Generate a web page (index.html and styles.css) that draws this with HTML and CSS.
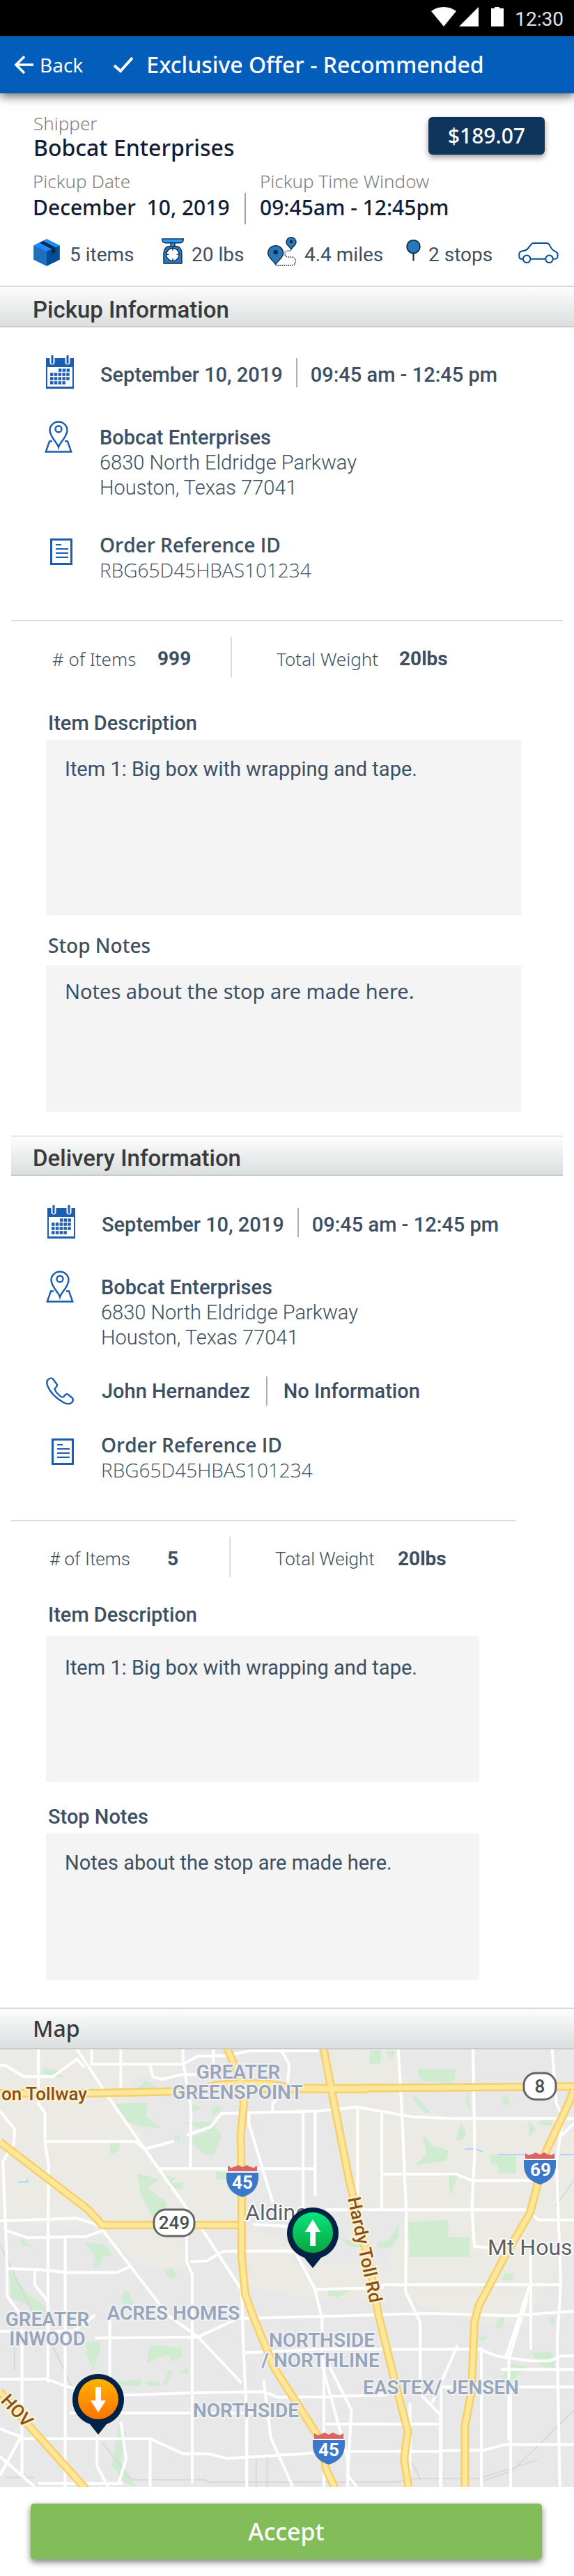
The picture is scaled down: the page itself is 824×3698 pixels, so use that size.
FILE: index.html
```html
<!DOCTYPE html>
<html lang="en">
<head>
<meta charset="utf-8">
<meta name="viewport" content="width=device-width, initial-scale=1">
<title>Exclusive Offer - Recommended</title>
<link rel="stylesheet" href="styles.css">
</head>
<body>
<svg class="sprite" aria-hidden="true">
  <symbol id="calendar" viewBox="0 0 40 48">
    <path d="M0 4h40v44H0z" fill="#1b5db3"/>
    <path d="M2 17h36v28H2z" fill="#fff"/>
    <path d="M9 2v8M31 2v8" stroke="#fff" stroke-width="7" stroke-linecap="round"/>
    <path d="M9 1v10M31 1v10" stroke="#1b5db3" stroke-width="3" stroke-linecap="round"/>
    <path d="M18 21.500h16M6 27.500h28M6 33.500h28M6 39.500h22" stroke="#1b5db3" stroke-width="4.500" stroke-dasharray="4.500 1.300"/>
  </symbol>
  <symbol id="place" viewBox="0 0 40 46">
    <g fill="none" stroke="#1b5db3" stroke-width="2.400">
      <path d="M20 38C18 31 7.500 23 7.500 13.500a12.500 12 0 0 1 25 0C32.500 23 22 31 20 38z"/>
      <circle cx="20" cy="12" r="4.500"/>
      <path d="M11 29.500H7L1.800 44.500h36.400L33 29.500h-4"/>
    </g>
  </symbol>
  <symbol id="order" viewBox="0 0 32 38">
    <path d="M1.500 1.500h29v35h-29z" fill="none" stroke="#1b5db3" stroke-width="3"/>
    <path d="M8 9h8M8 15h18M8 21h18M8 27h18" stroke="#1b5db3" stroke-width="2"/>
  </symbol>
  <symbol id="phone" viewBox="0 0 40 40">
    <path d="M3.500 3C7 .5 9 1 11 4l4.500 6c1.500 3-.5 4.500-2.500 6-1.500 2 2 6 5 9s6 4.500 7.500 3l2-2.500c1.500-1.800 3.500-1.500 5 0l5 4c2 2 1.700 4 0 6.500-2.500 3-6.500 3-12 .5C15.500 31 6 22 2 12 .8 8 1 5 3.500 3z" fill="none" stroke="#1b5db3" stroke-width="2.400" stroke-linejoin="round"/>
  </symbol>
  <symbol id="interstate" viewBox="0 0 46 46">
    <path d="M2 1l5 3 6-2 4-2 6 3 6-3 4 2 6 2 5-3v8H2z" fill="#da6462"/>
    <path d="M0 11h46c1 16-3 29-23 35C3 40-1 27 0 11z" fill="#3b78c9"/>
    <path d="M0 10h46" stroke="#fff" stroke-width="2"/>
  </symbol>
</svg>

<div class="status">
  <svg class="status-icons" viewBox="0 0 104 28" aria-hidden="true">
    <path d="M0 6C10-2 26-2 36 6L18 28z M68 0v28H40z M86 2h5V0h7v2h6v26H86z" fill="#fff"/>
  </svg>
  <time>12:30</time>
</div>

<header class="topbar">
  <button class="back" type="button">
    <svg class="back-icon" viewBox="0 0 28 26" aria-hidden="true"><path d="M15 1L3 13l12 12M3 13h25" fill="none" stroke="#fff" stroke-width="3.500"/></svg>
    Back
  </button>
  <h1 class="title">
    <svg class="check-icon" viewBox="0 0 30 24" aria-hidden="true"><path d="M2 13l9 8L28 2" fill="none" stroke="#fff" stroke-width="4"/></svg>
    Exclusive Offer - Recommended
  </h1>
</header>

<main>
  <section class="summary">
    <div class="shipper">
      <div>
        <p class="caption">Shipper</p>
        <p class="name">Bobcat Enterprises</p>
      </div>
      <span class="price">$189.07</span>
    </div>
    <div class="window">
      <div class="window-date">
        <p class="caption">Pickup Date</p>
        <p class="value">December&nbsp; 10, 2019</p>
      </div>
      <div class="window-time">
        <p class="caption">Pickup Time Window</p>
        <p class="value">09:45am - 12:45pm</p>
      </div>
    </div>
    <ul class="stats">
      <li class="stat stat-items">
        <svg width="38" height="39" viewBox="0 0 114 118" aria-hidden="true">
          <path d="M57 0l57 28-57 28L0 28z" fill="#1a8cff"/><path d="M0 28l57 26v64L0 90z" fill="#1f6fbd"/><path d="M114 28L57 54v64l57-28z" fill="#004e98"/>
          <path d="M26 17l16-8 52 27v22l-15 8V44z" fill="#0c2947"/>
        </svg>
        5 items
      </li>
      <li class="stat stat-weight">
        <svg width="32" height="37" viewBox="0 0 98 112" aria-hidden="true">
          <g stroke="#0c2947" stroke-width="4">
            <path d="M40 18h18v18H40z" fill="#2f97f7"/>
            <path d="M2 2h94c0 13-5 18-14 18H16C7 20 2 15 2 2z" fill="#2f97f7"/>
            <path d="M9 110V66c0-20 12-32 26-32h28c14 0 26 12 26 32v44z" fill="#2879b9"/>
            <circle cx="49" cy="71" r="28" fill="#fff"/>
            <path d="M49 45v9M49 88v9M23 71h9M66 71h9"/>
          </g>
        </svg>
        20 lbs
      </li>
      <li class="stat stat-miles">
        <svg width="42" height="42" viewBox="0 0 126 126" aria-hidden="true">
          <g fill="#2879b9" stroke="#0c2947" stroke-width="4">
            <path d="M35 119C24 99 2 92 2 70a33 32 0 0 1 66 0c0 22-22 29-33 49z"/>
            <path d="M102 54C96 42 81 36 81 23a21 21 0 0 1 42 0c0 13-15 19-21 31z"/>
          </g>
          <circle cx="35" cy="66" r="10" fill="#0c2947"/><circle cx="102" cy="21" r="7" fill="#0c2947"/>
          <path d="M100 60H84c-14 6-12 26 4 27h18c20 2 20 32 0 36H36" fill="none" stroke="#0c2947" stroke-width="4" stroke-dasharray="5 4"/>
        </svg>
        4.4 miles
      </li>
      <li class="stat stat-stops">
        <svg width="21" height="31" viewBox="0 0 62 92" aria-hidden="true"><path d="M31 56v35" stroke="#0c2947" stroke-width="6"/><circle cx="31" cy="30" r="28" fill="#2879b9" stroke="#0c2947" stroke-width="5"/></svg>
        2 stops
      </li>
      <li class="stat stat-vehicle">
        <svg width="58" height="30" viewBox="0 0 174 91" role="img" aria-label="Car">
          <g fill="none" stroke="#004e98" stroke-width="6">
            <path d="M19 72h-6C5 72 3 67 3 60V50c0-9 7-11 25-15 9-2 12-6 18-15C55 7 58 3 68 3h54c10 0 12 6 18 18 5 10 9 13 18 17 10 4 13 8 13 18 0 12-3 16-13 16h-7M54 72h62"/>
            <circle cx="36" cy="72" r="16"/><circle cx="134" cy="72" r="16"/>
          </g>
        </svg>
      </li>
    </ul>
  </section>

  <section>
    <h2 class="section-head">Pickup Information</h2>
    <div class="details">
      <div class="detail detail-date">
        <svg class="icon" width="40" height="48" aria-hidden="true"><use href="#calendar"/></svg>
        <span class="strong">September 10, 2019</span>
        <span class="rule"></span>
        <span class="strong">09:45 am - 12:45 pm</span>
      </div>
      <div class="detail">
        <svg class="icon" width="40" height="46" aria-hidden="true"><use href="#place"/></svg>
        <address class="address"><b class="strong">Bobcat Enterprises</b><br>6830 North Eldridge Parkway<br>Houston, Texas 77041</address>
      </div>
      <div class="detail">
        <svg class="icon icon-order" width="32" height="38" aria-hidden="true"><use href="#order"/></svg>
        <p class="reference"><b class="strong">Order Reference ID</b><br>RBG65D45HBAS101234</p>
      </div>
    </div>
    <hr class="line">
    <div class="counts">
      <span class="count-label humanist"># of Items</span><b class="count">999</b>
      <span class="count-rule"></span>
      <span class="count-label humanist">Total Weight</span><b class="count">20lbs</b>
    </div>
    <div class="notes">
      <label for="pickup-items">Item Description</label>
      <textarea class="note note-tall" id="pickup-items" readonly>Item 1: Big box with wrapping and tape.</textarea>
      <label class="humanist label-roomy" for="pickup-notes">Stop Notes</label>
      <textarea class="note humanist note-high" id="pickup-notes" readonly>Notes about the stop are made here.</textarea>
    </div>
  </section>

  <section class="delivery">
    <h2 class="section-head section-head-inset">Delivery Information</h2>
    <div class="details details-delivery">
      <div class="detail detail-date">
        <svg class="icon" width="40" height="48" aria-hidden="true"><use href="#calendar"/></svg>
        <span class="strong">September 10, 2019</span>
        <span class="rule"></span>
        <span class="strong">09:45 am - 12:45 pm</span>
      </div>
      <div class="detail">
        <svg class="icon" width="40" height="46" aria-hidden="true"><use href="#place"/></svg>
        <address class="address"><b class="strong">Bobcat Enterprises</b><br>6830 North Eldridge Parkway<br>Houston, Texas 77041</address>
      </div>
      <div class="detail detail-contact">
        <svg class="icon" width="40" height="40" aria-hidden="true"><use href="#phone"/></svg>
        <span class="strong">John Hernandez</span>
        <span class="rule"></span>
        <span class="strong">No Information</span>
      </div>
      <div class="detail">
        <svg class="icon icon-order" width="32" height="38" aria-hidden="true"><use href="#order"/></svg>
        <p class="reference"><b class="strong">Order Reference ID</b><br>RBG65D45HBAS101234</p>
      </div>
    </div>
    <hr class="line line-short">
    <div class="counts counts-delivery">
      <span class="count-label"># of Items</span><b class="count">5</b>
      <span class="count-rule"></span>
      <span class="count-label">Total Weight</span><b class="count">20lbs</b>
    </div>
    <div class="notes notes-delivery">
      <label for="delivery-items">Item Description</label>
      <textarea class="note note-low" id="delivery-items" readonly>Item 1: Big box with wrapping and tape.</textarea>
      <label for="delivery-notes">Stop Notes</label>
      <textarea class="note" id="delivery-notes" readonly>Notes about the stop are made here.</textarea>
    </div>
  </section>

  <section>
    <h2 class="section-head section-head-map">Map</h2>
    <svg class="map" viewBox="0 0 824 628" preserveAspectRatio="xMidYMid slice" role="img" aria-label="Map of the pickup and delivery stops">
      <defs>
        <linearGradient id="go" x1="0" y1="0" x2="0" y2="1"><stop offset="0" stop-color="#07e57d"/><stop offset="1" stop-color="#0aa53f"/></linearGradient>
        <linearGradient id="drop" x1="0" y1="0" x2="0" y2="1"><stop offset="0" stop-color="#ffb300"/><stop offset="1" stop-color="#ff7300"/></linearGradient>
      </defs>
      <rect width="824" height="628" fill="#e8e8e8"/>
      <g class="terrain" transform="translate(0 -12) scale(.5255 .3333)">
        <path class="land" d="M0 30H500V130L360 160 370 330 430 550 650 560 650 780 480 800 515 970 400 980 250 800 0 780zM890 30H1090L1110 300 1300 330 1568 330V860L1440 1180 1270 1160 1040 1040 1110 740 980 700 910 300zM680 800L790 870 800 960 1040 960 1060 1100 860 1110 680 1060zM1060 1080H1450L1440 1230 1290 1210z"/>
        <path class="park" d="M120 115l40 15 15 30-60-20zM400 170l25 25v30H355zM315 270l85-5v60l40 50-60-10-40-20zM300 435h27v35l-25 20zM500 350l75-5 30 60-20 85h-25l-50-70 60-30zM470 410l25 0-5 25zM525 270l25 20-25 15zM580 280l35 5-35 35zM375 570l60 25-30 40 50 60v60l-40 0-30-90zM460 610h40v25h-40zM450 580l30 10-20 30zM590 560l30 10v25l-30 0zM1010 40h30l0 55-30 5zM1050 45l30 0-10 30zM1140 120h105l-5 60-30 0-60-10zM1130 230l45 75-10 10-35-60zM1280 220l5 90-15-50zM1370 240l20 0v35h-15zM1155 400l25 50 45 20-5 45-85 20 30-50zM1260 350l15 50-15 30-15-5zM1445 345l20 35-20 30zM1480 335l25 5 5 25-40-5zM1340 490h70v80h-50v-40h-20zM1225 570l25 10-20 90zM1115 780l110-10v75h58v85h-165zM1090 785l0 55-25 50-35 0 0-20 35-15zM930 850l30 10 45 30-50-5zM1380 1000l25 0-5 30-30 0zM895 1075l65 0-35 30-30-10zM230 865l60 15 15 45-25 0-5 50-20 0 5-50zM60 850l30 35-30 0zM450 990l20-15 15 35-20 15zM335 1080l15-5 15 60-20 10-15-30zM25 985l20 40 30 60 50 60-5 50-50-60-40-30zM235 1295h40l-5 55-15 70-20-70zM410 1310l85 10 5 40-30 20-10-25-30 10-30 25zM460 1420l10 0-15 65-10-5zM495 1420l20-15v30l-25-5zM315 1465h30l40-10v30l-70 0zM400 1465l35 0v20l-35 0zM325 1650l20 40-15 120 40 110-30-20-35-70zM1390 1390l50 10-40 65-30-10zM1450 1340l60 0 5 75-15 10-30-40zM1360 1200l15-15 0 50-25 0zM1500 1190l15 0v35l-10 0zM1300 1275l35-5-15 25z"/>
        <path class="water" d="M50 607h25v-12M1270 465l30 0 20 12M1360 489h75M1530 489h38"/>
        <path class="rail" d="M0 880L90 1170M40 1260v160M140 1300l60 200M280 1730l80 160h200l8 10h520l20-15h200l160-80M1568 600l-50 110M700 1800v120M730 1790v130M15 1880h80M1568 1590L1400 1850 1320 1895M1120 1800l30 90"/>
        <path class="street" d="M0 105h15l50 48h80l65-75 20 35M105 30v240l18 40v130l10 100-2 240 0 690M250 30v70h250l40-35 80-2 60-20h190M208 30L300 250 395 465 560 830 680 1120 720 1300M330 30v170M500 30v60l22 200-2 255M410 105l8 50 25 10 50-20 90 0 0-110M765 30l25 70-5 100-40 70v30M510 405l65-35 30-58 160-6 110-5 100-17 150 42 100 8h350M395 465l80-33M125 433h245l25 30M430 550h430M680 305v50l65 340M828 305v430M861 305v360M977 280v440M1043 310v415M1088 30l10 280 12 440-2 330 40 130 0 310 55 90 0 310M1292 30l5 450-8 240 7 165 40 5M1045 573h200l45 28h170M890 727h550l30 43h98M1508 30l12 240 18 60-18 190 12 530-10 240 8 690M1568 355l-40 60M0 300l40 80-2 60-30 80 10 390 2 190 50 110M0 775l210-12 60 30 190 390 80 90 120 200M15 815l60 32 160-5 45-25M20 980l90 5 70 12 140 0 35-25M95 990v60l35 70M178 850v720l0 350M510 840v110l15 55v900M520 950l45-3 45-42 200 0M690 790l100 8 10 90 60 180 20 130v200l70 400 0 320M865 1070l180-8 0-13 490 0M0 1250h200l60-70M260 1280l280-5 110-80 250-10 270-12 230 10 168-20M300 1180v430M660 1040v1l4 250 10 330v300M670 1343l200-15h440l50 30 90 20 50 0 35-22 33 0M0 1457h130l50 30 120 40 230-12 190-5 40 25 300-10M190 1602h500M0 1670l70 43h340l90 65h70l50 20 100-10 200-20 400-5 60-25h188M885 1370v230l0 320M890 1650h315M1205 1490h190v430M1205 1490v430M1315 1320v600M1205 1490h363M720 1460l20 250 60 210M410 1720v200M60 1300v580M0 1790l95 130M0 1870l55-160M105 1905h230M890 1370l70 220-10 280 25 50M1568 1415h-200M1450 900v430M1450 1040l-70 330M1120 1560l0 350M1250 1310l-70 250M330 1640l15 160-20 100M265 1700v130l30 90M1440 1110l-50 260v350"/>
        <path class="highway" d="M0 225h250l280-10 60-25 60-8 80 2 70 18 100 2 728-9M535 207h270l200 0M620 30l38 140 8 100-8 130 2 260 0 270 10 160 20 90 60 230 130 320 10 110 52 180M884 30l20 170 50 400 60 400 20 180 50 320 30 180-10 120 12 120M1568 210l-15 60-60 200-25 150-20 120-70 190-70 210-12 70-8 300-18 150v270M0 435l240 290 40 68h370M0 1510l75 140 160 280"/>
        <path class="highway-fill" d="M0 225h250l280-10 60-25 60-8 80 2 70 18 100 2 728-9M535 207h270l200 0M620 30l38 140 8 100-8 130 2 260 0 270 10 160 20 90 60 230 130 320 10 110 52 180M884 30l20 170 50 400 60 400 20 180 50 320 30 180-10 120 12 120M1568 210l-15 60-60 200-25 150-20 120-70 190-70 210-12 70-8 300-18 150v270M0 435l240 290 40 68h370M0 1510l75 140 160 280"/>
      </g>
      <g class="area">
        <text x="342" y="42">GREATER</text><text x="341" y="71">GREENSPOINT</text>
        <text x="249" y="388">ACRES HOMES</text><text x="68" y="397">GREATER</text><text x="68" y="425">INWOOD</text>
        <text x="462" y="427">NORTHSIDE</text><text x="460" y="456">/ NORTHLINE</text>
        <text x="633" y="495">EASTEX/ JENSEN</text><text x="353" y="528">NORTHSIDE</text>
      </g>
      <g class="road-name">
        <text x="125" y="73" text-anchor="end">on Tollway</text>
        <text transform="translate(499 214) rotate(78)">Hardy Toll Rd</text>
        <text transform="translate(36 544) rotate(47)" text-anchor="end">HOV</text>
      </g>
      <g class="town"><text x="352" y="245">Aldine</text><text x="700" y="295">Mt Hous</text></g>
      <g class="route">
        <rect x="752" y="34" width="46" height="38" rx="17"/><text x="775" y="62">8</text>
        <rect x="221" y="230" width="58" height="38" rx="17"/><text x="250" y="258">249</text>
      </g>
      <g class="interstate">
        <use href="#interstate" x="325" y="166" width="46" height="46"/><text x="348" y="200">45</text>
        <use href="#interstate" x="752" y="148" width="46" height="46"/><text x="776" y="182">69</text>
        <use href="#interstate" x="449" y="550" width="46" height="46"/><text x="472" y="584">45</text>
      </g>
      <path d="M449 314l-12-15a37 37 0 1 1 24 0z" fill="#002245"/>
      <circle cx="449" cy="263" r="29" fill="url(#go)"/>
      <path d="M449 244l11 18h-7v20h-8v-20h-7z" fill="#fff"/>
      <path d="M141 553l-12-15a37 37 0 1 1 24 0z" fill="#002245"/>
      <circle cx="141" cy="502" r="29" fill="url(#drop)"/>
      <path d="M141 521l-11-17h7v-19h8v19h7z" fill="#fff"/>
    </svg>
  </section>
</main>

<footer class="actions"><button class="accept" type="button">Accept</button></footer>
</body>
</html>
```
FILE: styles.css
```css
* { box-sizing: border-box; }

body {
  margin: 0;
  background: #fff;
  color: #3d4f63;
  font: 28px/36px Roboto, sans-serif;
}

h1, h2, p, ul { margin: 0; padding: 0; font-weight: 500; }
svg { display: block; flex: none; }
.sprite { position: absolute; width: 0; height: 0; }
.humanist { font-family: "Noto Sans", sans-serif; }

/* Status bar and title bar */
.status {
  display: flex;
  justify-content: flex-end;
  gap: 16px;
  height: 52px;
  padding: 10px 15px 0 0;
  background: #000;
  color: #e4e4e4;
}
.status-icons { width: 104px; height: 28px; }
.status time { line-height: 36px; }

.topbar {
  display: flex;
  align-items: center;
  gap: 43px;
  height: 82px;
  padding: 0 20px;
  background: #025dbb;
  color: #fff;
  font-family: "Noto Sans", sans-serif;
  box-shadow: 0 4px 14px rgba(0, 0, 0, .6);
}
.back {
  display: flex;
  align-items: center;
  gap: 9px;
  padding: 0;
  border: 0;
  background: none;
  color: inherit;
  font: inherit;
}
.back-icon { width: 28px; height: 26px; }
.title { display: flex; align-items: center; gap: 18px; font-size: 32px; }
.check-icon { width: 30px; height: 24px; }

/* Offer summary */
.summary { padding: 26px 0 28px; font-family: "Noto Sans", sans-serif; }
.shipper {
  display: flex;
  justify-content: space-between;
  align-items: flex-start;
  padding: 0 42px 0 48px;
}
.caption { color: #808080; font-size: 26px; line-height: 34px; font-weight: 300; }
.name { color: #141d38; font-size: 32px; }
.price {
  margin-top: 8px;
  padding: 0 28px;
  border-radius: 6px;
  background: #0e365d;
  color: #fff;
  font-size: 30px;
  font-weight: 500;
  line-height: 54px;
  box-shadow: 0 4px 8px rgba(0, 0, 0, .4);
}
.window { display: flex; margin-top: 13px; padding-left: 47px; }
.window-date { width: 304px; }
.window-time { position: relative; padding-left: 22px; }
.window-time::before {
  content: "";
  position: absolute;
  left: 0;
  bottom: -3px;
  width: 2px;
  height: 45px;
  background: #9aa3b0;
}
.value { color: #141d38; font-size: 30px; line-height: 42px; }
.stats {
  display: grid;
  grid-template-columns: 184fr 152fr 199fr 161fr 58fr;
  margin-top: 21px;
  padding: 0 22px 0 48px;
  list-style: none;
  font: 400 28px/32px Roboto, sans-serif;
}
.stat { display: flex; align-items: flex-end; height: 42px; white-space: nowrap; }
.stat-items { gap: 14px; }
.stat-weight, .stat-miles, .stat-stops { gap: 11px; }
.stat-weight svg { margin-bottom: 3px; }
.stat-stops svg { margin-bottom: 7px; }
.stat-vehicle svg { margin-bottom: 4px; }

/* Section headings */
.section-head {
  padding: 10px 47px 0;
  border-top: 2px solid #d8d8d8;
  border-bottom: 2px solid #c9cbcd;
  background: linear-gradient(#fcfdfc, #dbdfe0);
  color: #3a3a3a;
  font-size: 33px;
  line-height: 46px;
}
.section-head-inset { margin: 0 16px; padding: 8px 31px 0; border-top-color: #ebebeb; }
.section-head-map { padding-top: 0; font-family: "Noto Sans", sans-serif; font-size: 32px; line-height: 56px; }

/* Stop details */
.details { display: flex; flex-direction: column; gap: 46px; padding: 40px 16px 0 64px; }
.detail { display: flex; align-items: flex-start; gap: 39px; font-size: 29px; }
.strong { font-weight: 500; }
.detail-date { align-items: flex-end; gap: 19px; padding-left: 2px; line-height: 40px; }
.detail-date .icon { margin-right: 19px; }
.rule { flex: none; width: 2px; height: 42px; background: #a9b1bd; }
.detail-date .rule { margin-bottom: 2px; }
.address { margin-top: 6px; font-style: normal; font-weight: 300; }
.icon-order { margin: 9px 0 0 8px; }
.reference { font-family: "Open Sans", sans-serif; font-size: 28px; font-weight: 300; }
.reference .strong { font-weight: 600; }
.details-delivery { padding: 42px 16px 0 66px; }
.details-delivery .detail-date { padding-left: 2px; }
.detail-contact { align-items: center; gap: 23px; margin: -8px 0; line-height: 40px; }
.detail-contact .icon { margin-right: 17px; }

.line { margin: 54px 16px 0; border: 0; border-top: 2px solid #dbdfdf; }
.line-short { margin-right: 84px; }

.counts {
  display: grid;
  grid-template-columns: 151px 105px 66px 176px 1fr;
  align-items: end;
  height: 80px;
  padding: 22px 0 0 75px;
  line-height: 52px;
}
.counts-delivery { padding-left: 71px; grid-template-columns: 153px 105px 66px 176px 1fr; }
.count-label { font-size: 26px; font-weight: 300; }
.count { justify-self: start; min-width: 48px; text-align: center; font-weight: 700; }
.count-rule { height: 58px; border-left: 2px solid #dcdedf; }

/* Notes */
.notes { display: flex; flex-direction: column; padding: 48px 76px 34px 66px; font-size: 29px; }
.notes label { padding-left: 3px; font-weight: 500; }
.note {
  height: 210px;
  margin: 6px 0 0;
  padding: 24px 27px;
  border: 0;
  background: #f4f4f4;
  color: inherit;
  font-size: 29px;
  line-height: 36px;
  resize: none;
}
.note:not(.humanist) { font-family: Roboto, sans-serif; }
.note-tall { height: 252px; }
.notes .label-roomy { margin-top: 25px; font-size: 28px; }
.note-high { margin-top: 11px; padding-top: 19px; }
.notes-delivery { padding: 36px 136px 40px 66px; }
.note-low { margin: 12px 0 32px; padding-top: 28px; }

/* Map */
.map { width: 100%; height: 628px; }
.terrain path { fill: none; vector-effect: non-scaling-stroke; }
.terrain .land { fill: #ebeae4; }
.terrain .park { fill: #cfecd0; }
.water { stroke: #a9d7fb; stroke-width: 2; }
.rail { stroke: #d5d9dc; stroke-width: 2; }
.street { stroke: #fff; stroke-width: 4; stroke-linejoin: round; }
.highway { stroke: #f6cf65; stroke-width: 12; stroke-linejoin: round; }
.highway-fill { stroke: #fee69b; stroke-width: 7; stroke-linejoin: round; }
.map text { font-family: Roboto, sans-serif; font-size: 26px; paint-order: stroke; stroke-linejoin: round; }
.map .area text { fill: #98a6bd; stroke: #f1f1f1; stroke-width: 4; font-size: 28px; font-weight: 600; text-anchor: middle; }
.road-name text { fill: #865019; stroke: #fdf1cf; stroke-width: 5; font-weight: 500; }
.map .town text { fill: #5c6066; stroke: #fff; stroke-width: 4; font-size: 32px; }
.route rect { fill: #fff; stroke: #666; stroke-width: 3; }
.route text { fill: #4c4c4c; font-weight: 500; text-anchor: middle; }
.interstate text { fill: #fff; font-weight: 700; text-anchor: middle; }

/* Footer action */
.actions { padding: 24px 46px 24px 44px; }
.accept {
  display: block;
  width: 100%;
  height: 80px;
  border: 0;
  border-radius: 5px;
  background: #82bd5a;
  color: #fff;
  font: 500 34px/40px "Noto Sans", sans-serif;
  box-shadow: 0 4px 10px rgba(0, 0, 0, .5);
}
```
